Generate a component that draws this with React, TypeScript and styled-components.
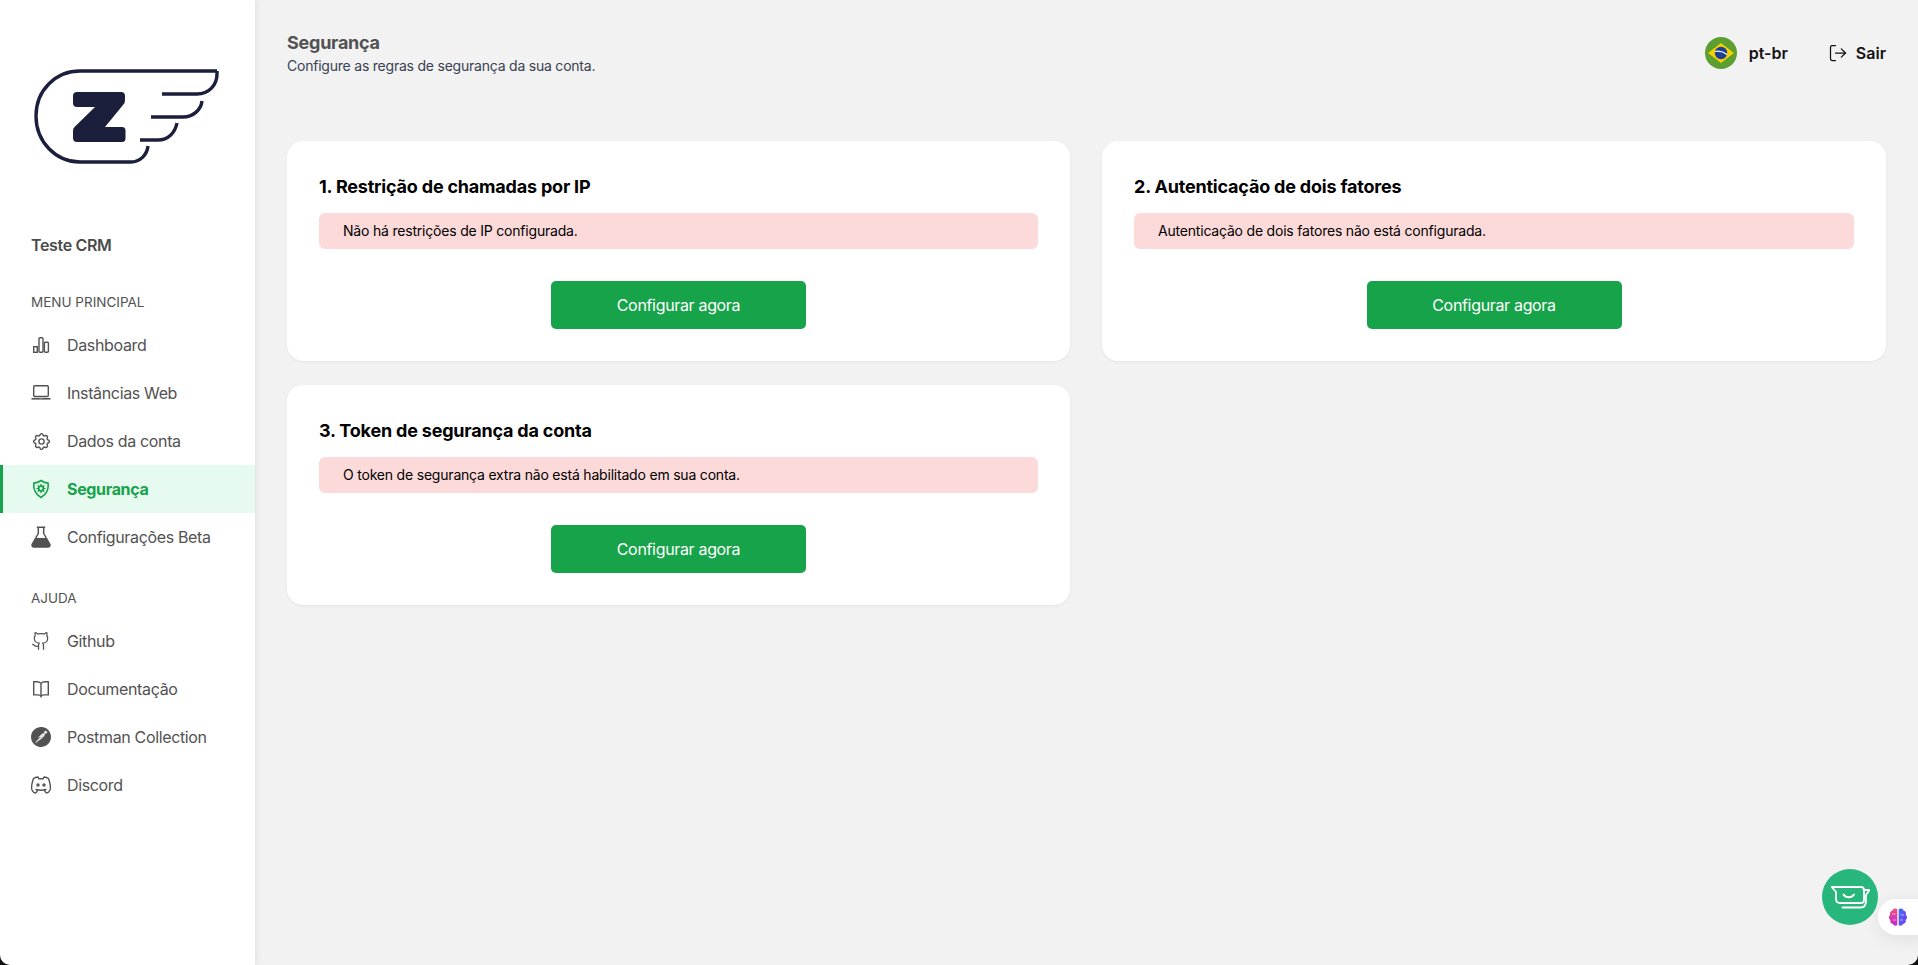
import { createGlobalStyle } from 'styled-components';
import styled from 'styled-components';
import type { ReactNode } from 'react';
import { Github, LogOut } from 'lucide-react';
import { SiPostman } from 'react-icons/si';
import { TbBrandDiscord, TbSettings } from 'react-icons/tb';

const GlobalStyle = createGlobalStyle`
  html, body {
    margin: 0;
    height: 100%;
    background: #f2f2f2;
    font-family: Inter, "Noto Sans", sans-serif;
    overflow: hidden;
  }
  #root { height: 100%; }
  * { box-sizing: border-box; }
`;

const Layout = styled.div`
  display: flex;
  height: 965px;
`;

const Sidebar = styled.aside`
  width: 255px;
  flex-shrink: 0;
  background: #fff;
  box-shadow: 0 0 8px rgba(0, 0, 0, 0.1);
  color: #525252;
`;

const LogoWrap = styled.div`
  height: 233px;
  padding: 64px 0 0 32px;
`;

const AccountName = styled.div`
  padding-left: 31px;
  font-size: 16px;
  line-height: 24px;
  font-weight: 600;
  letter-spacing: -0.35px;
  color: #4b4b4b;
`;

const SectionLabel = styled.div<{ $top: number }>`
  margin-top: ${({ $top }) => $top}px;
  margin-bottom: 9px;
  padding-left: 31px;
  font-size: 13.5px;
  line-height: 20px;
  color: #525252;
`;

const NavRow = styled.a<{ $active?: boolean }>`
  display: flex;
  align-items: center;
  gap: 16px;
  height: 48px;
  padding-left: ${({ $active }) => ($active ? 28 : 31)}px;
  border-left: ${({ $active }) => ($active ? '3px solid #16a34a' : '0')};
  background: ${({ $active }) => ($active ? '#e6faef' : 'transparent')};
  color: ${({ $active }) => ($active ? '#16a34a' : '#525252')};
  font-size: 16px;
  font-weight: ${({ $active }) => ($active ? 700 : 400)};
  letter-spacing: -0.35px;
`;

const IconSlot = styled.span`
  display: flex;
  width: 20px;
  height: 20px;
  align-items: center;
  justify-content: center;
  flex-shrink: 0;

  svg {
    flex-shrink: 0;
  }
`;

const Main = styled.main`
  flex: 1;
  min-width: 0;
  padding: 32px 32px 0;
`;

const Header = styled.header`
  display: flex;
  justify-content: space-between;
  height: 109px;
`;

const PageTitle = styled.h1`
  margin: 1px 0 0;
  font-size: 18px;
  line-height: 20px;
  font-weight: 700;
  letter-spacing: -0.25px;
  color: #525252;
`;

const PageSub = styled.p`
  margin: 3px 0 0;
  font-size: 14px;
  line-height: 20px;
  letter-spacing: -0.22px;
  color: #374151;
`;

const HeaderActions = styled.div`
  display: flex;
  align-items: center;
  height: 42px;
`;

const HeaderLink = styled.span<{ $gap: number; $left?: number }>`
  display: flex;
  align-items: center;
  gap: ${({ $gap }) => $gap}px;
  margin-left: ${({ $left }) => $left ?? 0}px;
  font-size: 16px;
  font-weight: 600;
  color: #111;
`;

const CardGrid = styled.div`
  display: grid;
  grid-template-columns: 783px 784px;
  gap: 24px 32px;
  align-items: start;
`;

const Card = styled.section`
  height: 220px;
  padding: 32px;
  background: #fff;
  border-radius: 16px;
  box-shadow: 0 1px 3px rgba(0, 0, 0, 0.06);
`;

const CardTitle = styled.h2`
  margin: 0;
  font-size: 18px;
  line-height: 28px;
  font-weight: 700;
  letter-spacing: -0.2px;
  color: #000;
`;

const Alert = styled.div`
  height: 36px;
  margin-top: 12px;
  padding: 0 24px 1px;
  display: flex;
  align-items: center;
  background: #fcdada;
  border-radius: 6px;
  font-size: 14px;
  letter-spacing: -0.2px;
  color: #000;
`;

const ButtonRow = styled.div`
  display: flex;
  justify-content: center;
  margin-top: 32px;
`;

const ConfigButton = styled.button`
  width: 255px;
  height: 48px;
  border: 0;
  border-radius: 5px;
  background: #16a34a;
  color: #fff;
  font-family: inherit;
  font-size: 16px;
  font-weight: 400;
  letter-spacing: -0.33px;
`;

const ChatBubble = styled.div`
  position: fixed;
  right: 40px;
  bottom: 40px;
  width: 56px;
  height: 56px;
  display: flex;
  align-items: center;
  justify-content: center;
  border-radius: 50%;
  background: #27b67c;
`;

const BrainPill = styled.div`
  position: fixed;
  right: -20px;
  bottom: 30px;
  width: 60px;
  height: 36px;
  padding-left: 10px;
  display: flex;
  align-items: center;
  background: #fff;
  border-radius: 18px;
  box-shadow: 0 4px 20px rgba(0, 0, 0, 0.08);
`;

const WindowCorner = styled.svg<{ $side: 'left' | 'right' }>`
  position: fixed;
  bottom: 0;
  ${({ $side }) => $side}: 0;
  width: 10px;
  height: 10px;
`;

function Logo() {
  return (
    <svg width="190" height="105" viewBox="32 64 190 105" fill="none">
      <path
        d="M217 71v3c0 11-8 20-20 20h-35M202 101c-1 9-9 16-19 16h-32M177 123c-2 10-9 17-19 17h-18M148 146c-1 9-8 16-17 16H80c-24 0-44-20-44-46s20-45 44-45h137"
        stroke="#1b1f3b"
        strokeWidth="3.4"
      />
      <path
        d="M77 92h44a4 4 0 0 1 4 4v4a6 6 0 0 1-2 5l-18 22h17a3.500 3.500 0 0 1 3.500 3.500v8a3.500 3.500 0 0 1-3.500 3.500H77a4 4 0 0 1-4-4v-7a5 5 0 0 1 1.500-4L95 107H77a4 4 0 0 1-4-4v-7a4 4 0 0 1 4-4z"
        fill="#1b1f3b"
      />
    </svg>
  );
}

function BarsIcon() {
  return (
    <svg width="20" height="20" viewBox="0 0 20 20" fill="none" stroke="currentColor" strokeWidth="1.400">
      <rect x="2.700" y="11.700" width="3.600" height="5.600" />
      <rect x="8" y="2.700" width="4" height="14.600" rx="1" />
      <rect x="13.400" y="7.200" width="4" height="10.100" rx="1" />
    </svg>
  );
}

function LaptopIcon() {
  return (
    <svg width="20" height="20" viewBox="0 0 20 20" fill="none" stroke="currentColor" strokeWidth="1.400">
      <rect x="2.700" y="2.700" width="14.600" height="10.800" rx="1" />
      <path d="M.500 15.800h19" strokeWidth="1.600" />
      <path d="M8.500 15.200h3" strokeWidth="1" stroke="#9a9a9a" />
    </svg>
  );
}

function ShieldCogIcon() {
  return (
    <svg width="20" height="20" viewBox="0 0 20 20" fill="none" stroke="currentColor" strokeWidth="1.600" strokeLinejoin="round">
      <path d="M10 1.500c2.200 1.700 4.600 2.500 7.200 2.600.5 6.300-1.700 11.300-7.200 14.400-5.500-3.100-7.700-8.100-7.200-14.400 2.600-.1 5-.9 7.200-2.600z" />
      <circle cx="10" cy="9.500" r="2.300" fill="none" strokeWidth="1.700" />
      <path d="M10 5.500v1.400M10 12.100v1.400M6 9.500h1.400M12.600 9.500H14M7.200 6.700l1 1M11.800 11.300l1 1M12.800 6.700l-1 1M8.200 11.300l-1 1" strokeLinecap="round" strokeWidth="1.400" />
    </svg>
  );
}

function FlaskIcon() {
  return (
    <svg width="20" height="22" viewBox="0 0 20 22" fill="none" stroke="currentColor" strokeWidth="1.500" strokeLinejoin="round">
      <path d="M5.800 1.200h8.400M7.300 1.200v6.300L1.300 18c-.8 1.500.2 3 1.700 3h14c1.500 0 2.500-1.500 1.700-3l-6-10.500V1.200" />
      <path d="M4.700 12h10.600l3.700 7c.4 1-.3 2-1.500 2H2.500c-1.200 0-1.900-1-1.500-2z" fill="currentColor" stroke="none" />
    </svg>
  );
}

function BookIcon() {
  return (
    <svg width="20" height="20" viewBox="0 0 20 20" fill="none" stroke="currentColor" strokeWidth="1.400" strokeLinejoin="round">
      <path d="M10 4.400C9 3.300 7.800 2.700 6 2.700H2.700v13.200H7c1.300 0 2.300.4 3 1.400.7-1 1.700-1.400 3-1.400h4.300V2.700H14c-1.800 0-3 .6-4 1.700zM10 4.400v14.100" />
    </svg>
  );
}

function BrazilFlag() {
  return (
    <svg width="32" height="32" viewBox="0 0 32 32">
      <circle cx="16" cy="16" r="16" fill="#5c9e31" />
      <path d="M16 6l13 10-13 10L3 16z" fill="#f7d000" />
      <circle cx="16" cy="16" r="6.200" fill="#1b3f94" />
      <path d="M10 14.500c4-1 8.500.2 12 3" stroke="#fff" strokeWidth="1.200" fill="none" />
    </svg>
  );
}

function ChatIcon() {
  return (
    <svg width="39" height="23" viewBox="0 0 39 23" fill="none" stroke="#fff" strokeWidth="1.800" strokeLinecap="round" strokeLinejoin="round">
      <path d="M.800 1H30c2 0 3 1 3 3v10c0 2-1 3-3 3H9c-2.500 0-4-1.500-4-4V6z" />
      <path d="M33 4h5.500L35 9v6c0 4-2 6.500-5.500 6.500H11.500" />
      <path d="M12.500 8.500c2.500 3.700 8 3.700 10.500 0" strokeWidth="2" />
    </svg>
  );
}

function BrainIcon() {
  return (
    <svg width="20" height="20" viewBox="0 0 20 20">
      <defs>
        <linearGradient id="brainL" x1="0" y1="0" x2="0" y2="1">
          <stop offset="0" stopColor="#f0527f" />
          <stop offset="1" stopColor="#c226d8" />
        </linearGradient>
        <linearGradient id="brainR" x1="0" y1="0" x2="1" y2="1">
          <stop offset="0" stopColor="#3d6bf5" />
          <stop offset="1" stopColor="#7a3cf0" />
        </linearGradient>
      </defs>
      <path d="M9.300 2.200C7.500.8 5 1.600 4.500 3.600 2.500 4 1.500 6 2.200 7.800.5 9.200.5 11.800 2.300 13c-.5 2 .8 3.800 2.700 4 .8 1.800 3 2.300 4.300 1z" fill="url(#brainL)" />
      <path d="M10.700 2.200c1.800-1.400 4.300-.6 4.800 1.400 2 .4 3 2.400 2.300 4.200 1.700 1.400 1.700 4-.1 5.200.5 2-.8 3.800-2.700 4-.8 1.800-3 2.300-4.300 1z" fill="url(#brainR)" />
      <path d="M4 7h3.500M5 13h3M12 6.500l2 2 2-1M12 13h3" stroke="#fff" strokeOpacity=".7" strokeWidth=".8" fill="none" />
    </svg>
  );
}

interface NavItem {
  label: string;
  icon: ReactNode;
  active?: boolean;
}

const mainItems: NavItem[] = [
  { label: 'Dashboard', icon: <BarsIcon /> },
  { label: 'Instâncias Web', icon: <LaptopIcon /> },
  { label: 'Dados da conta', icon: <TbSettings size={21} strokeWidth={1.6} /> },
  { label: 'Segurança', icon: <ShieldCogIcon />, active: true },
  { label: 'Configurações Beta', icon: <FlaskIcon /> },
];

const helpItems: NavItem[] = [
  { label: 'Github', icon: <Github size={20} strokeWidth={1.5} /> },
  { label: 'Documentação', icon: <BookIcon /> },
  { label: 'Postman Collection', icon: <SiPostman size={20} /> },
  { label: 'Discord', icon: <TbBrandDiscord size={24} strokeWidth={1.4} /> },
];

const cards = [
  { title: '1. Restrição de chamadas por IP', text: 'Não há restrições de IP configurada.' },
  { title: '2. Autenticação de dois fatores', text: 'Autenticação de dois fatores não está configurada.' },
  { title: '3. Token de segurança da conta', text: 'O token de segurança extra não está habilitado em sua conta.' },
];

function NavList({ items }: { items: NavItem[] }) {
  return (
    <>
      {items.map((item) => (
        <NavRow key={item.label} $active={item.active}>
          <IconSlot>{item.icon}</IconSlot>
          {item.label}
        </NavRow>
      ))}
    </>
  );
}

export default function App() {
  return (
    <>
      <GlobalStyle />
      <Layout>
        <Sidebar>
          <LogoWrap>
            <Logo />
          </LogoWrap>
          <AccountName>Teste CRM</AccountName>
          <SectionLabel $top={35}>MENU PRINCIPAL</SectionLabel>
          <NavList items={mainItems} />
          <SectionLabel $top={27}>AJUDA</SectionLabel>
          <NavList items={helpItems} />
        </Sidebar>
        <Main>
          <Header>
            <div>
              <PageTitle>Segurança</PageTitle>
              <PageSub>Configure as regras de segurança da sua conta.</PageSub>
            </div>
            <HeaderActions>
              <HeaderLink $gap={12}>
                <BrazilFlag />
                pt-br
              </HeaderLink>
              <HeaderLink $gap={8} $left={40}>
                <LogOut size={20} strokeWidth={1.5} />
                Sair
              </HeaderLink>
            </HeaderActions>
          </Header>
          <CardGrid>
            {cards.map((card) => (
              <Card key={card.title}>
                <CardTitle>{card.title}</CardTitle>
                <Alert>{card.text}</Alert>
                <ButtonRow>
                  <ConfigButton>Configurar agora</ConfigButton>
                </ButtonRow>
              </Card>
            ))}
          </CardGrid>
        </Main>
      </Layout>
      <BrainPill>
        <BrainIcon />
      </BrainPill>
      <ChatBubble>
        <ChatIcon />
      </ChatBubble>
      <WindowCorner $side="left" viewBox="0 0 10 10">
        <path d="M0 0a10 10 0 0 0 10 10H0z" fill="#111" />
      </WindowCorner>
      <WindowCorner $side="right" viewBox="0 0 10 10">
        <path d="M10 0a10 10 0 0 1-10 10h10z" fill="#111" />
      </WindowCorner>
    </>
  );
}
